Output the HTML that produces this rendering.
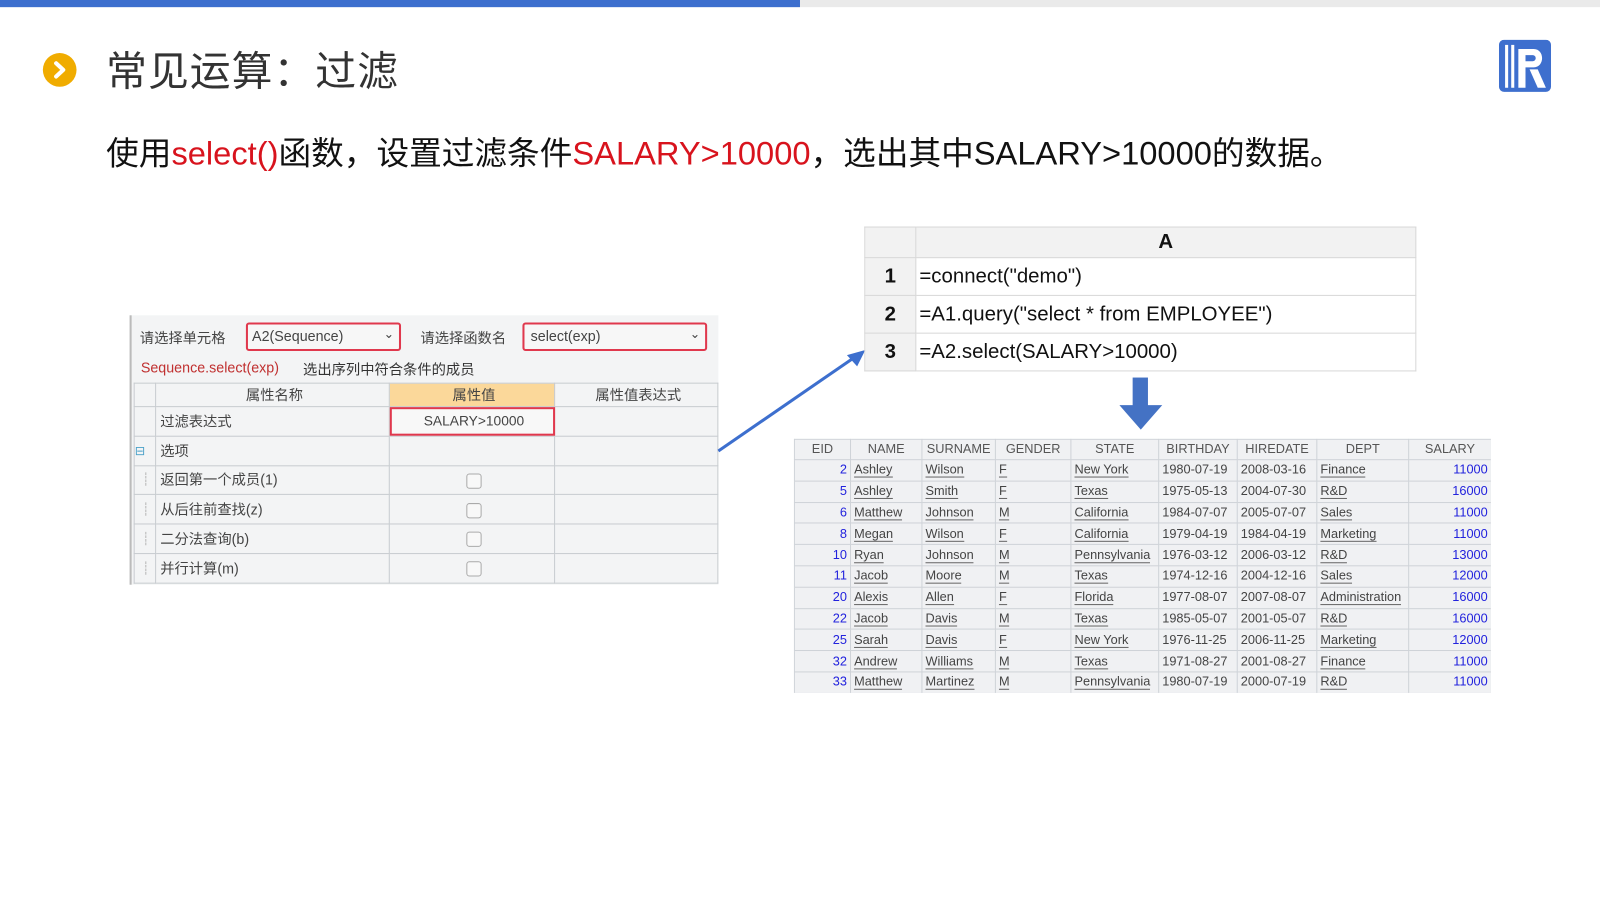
<!DOCTYPE html>
<html><head><meta charset="utf-8">
<style>
*{margin:0;padding:0;box-sizing:border-box}
body{width:1600px;height:900px;background:#fff;position:relative;overflow:hidden;font-family:"Liberation Sans","Noto Sans CJK SC",sans-serif}
#w{position:absolute;left:0;top:0;width:1568px;height:882px;transform:scale(1.0204);transform-origin:0 0}
.a{position:absolute}
table{border-collapse:collapse}
#dt{position:absolute;left:778px;top:430px;width:683px;height:249px;overflow:hidden;background:#f0f1f3}
#dt table{font-size:12.5px;color:#444;table-layout:fixed;width:683px}
#dt td{border:1px solid #cfd3d8;height:20.8px;padding:0 3px;white-space:nowrap;overflow:hidden;line-height:19px}
#dt tr:first-child td{text-align:center;color:#555;height:20px}
#dt td span{border-bottom:1.5px solid #666;}
#dt td.n{text-align:right;color:#2222dd}
#lp{position:absolute;left:127px;top:309px;width:577px;height:264px;background:#f3f4f5;border-left:2px solid #bbb}
#lp .g{position:absolute;left:2px;top:66px}
#lp table{font-size:14px;color:#444;table-layout:fixed}
#lp td{border:1.5px solid #c8ccd0;height:28.8px;padding-left:4px;white-space:nowrap}
.cb{display:inline-block;width:15px;height:15px;border:1.5px solid #aaa;border-radius:3px;background:#f8f8f8;vertical-align:middle}
#cg{position:absolute;left:847px;top:222px}
#cg table{font-family:"Liberation Sans","Noto Sans CJK SC",sans-serif;font-size:20px;color:#111}
#cg td{border:1.5px solid #d8d8d8;padding-left:3px}
#cg td.h{background:#f2f2f2;text-align:center;font-weight:bold;width:50px;padding:0}
</style></head><body>
<div id="w">
<div class="a" style="left:0;top:0;width:1568px;height:7px;background:#eaeaea"></div>
<div class="a" style="left:0;top:0;width:784px;height:7px;background:#3d6fce"></div>
<div class="a" style="left:42px;top:52px;width:33px;height:33px;border-radius:50%;background:#f0ac00"></div>
<svg class="a" style="left:42px;top:52px" width="33" height="33"><path d="M13 10 L20 16.5 L13 23" stroke="#fff" stroke-width="4" fill="none" stroke-linecap="round" stroke-linejoin="round"/></svg>
<div class="a" style="left:104px;top:38px;font-size:40px;color:#333;letter-spacing:1px">常见运算：过滤</div>
<svg class="a" style="left:1469px;top:39px" width="52" height="52" viewBox="0 0 52 52">
<rect x="0" y="0" width="51" height="51" rx="5" fill="#3e6fce"/>
<rect x="6" y="5" width="3" height="42" fill="#fff"/><rect x="12" y="5" width="3" height="42" fill="#fff"/>
<path d="M19 9 H34 C45 9 45 27 34 27 H26 V47 H19 Z M26 15 V21 H33 C37 21 37 15 33 15 Z" fill="#fff" fill-rule="evenodd"/>
<path d="M30 29 L38 47 H46 L38 29 Z" fill="#fff"/>
</svg>
<div class="a" style="left:104px;top:125px;font-size:32px;color:#111;white-space:nowrap">使用<span style="color:#d8131d">select()</span>函数，设置过滤条件<span style="color:#d8131d">SALARY&gt;10000</span>，选出其中SALARY&gt;10000的数据。</div>

<div id="lp">
<div class="a" style="left:8px;top:12px;font-size:14px;color:#444">请选择单元格</div>
<div class="a" style="left:112px;top:7px;width:152px;height:28px;border:2px solid #e0384d;border-radius:3px;background:#f7f7f7;font-size:14px;color:#444;padding:3px 4px">A2(Sequence)<span style="position:absolute;right:5px;top:2px;font-size:12px">&#8964;</span></div>
<div class="a" style="left:283px;top:12px;font-size:14px;color:#444">请选择函数名</div>
<div class="a" style="left:383px;top:7px;width:181px;height:28px;border:2px solid #e0384d;border-radius:3px;background:#f7f7f7;font-size:14px;color:#444;padding:3px 6px">select(exp)<span style="position:absolute;right:5px;top:2px;font-size:12px">&#8964;</span></div>
<div class="a" style="left:9px;top:43px;font-size:14px;color:#c03030">Sequence.select(exp)</div>
<div class="a" style="left:168px;top:43px;font-size:14px;color:#333">选出序列中符合条件的成员</div>
<div class="g"><table>
<colgroup><col style="width:21px"><col style="width:229px"><col style="width:162px"><col style="width:160px"></colgroup>
<tr style="text-align:center"><td style="height:23px"></td><td style="height:23px">属性名称</td><td style="background:#fbd89a;height:23px">属性值</td><td style="height:23px">属性值表达式</td></tr>
<tr><td></td><td>过滤表达式</td><td style="text-align:center;font-size:13.5px;outline:2px solid #e0384d;outline-offset:-2px;background:#f8f8f8">SALARY&gt;10000</td><td></td></tr>
<tr><td style="padding:0;color:#4aa0c8;font-size:12px">⊟</td><td>选项</td><td></td><td></td></tr>
<tr><td style="color:#888">┊</td><td>返回第一个成员(1)</td><td style="text-align:center"><span class="cb"></span></td><td></td></tr>
<tr><td style="color:#888">┊</td><td>从后往前查找(z)</td><td style="text-align:center"><span class="cb"></span></td><td></td></tr>
<tr><td style="color:#888">┊</td><td>二分法查询(b)</td><td style="text-align:center"><span class="cb"></span></td><td></td></tr>
<tr><td style="color:#888">┊</td><td>并行计算(m)</td><td style="text-align:center"><span class="cb"></span></td><td></td></tr>
</table></div>
</div>

<svg class="a" style="left:700px;top:335px" width="160" height="115"><path d="M4 107 L142 12" stroke="#3d6fce" stroke-width="3"/><path d="M148 8 L130 13 L140 24 Z" fill="#3d6fce"/></svg>

<div id="cg"><table>
<tr><td class="h" style="height:30px"></td><td class="h" style="width:490px">A</td></tr>
<tr><td class="h" style="height:37px">1</td><td>=connect("demo")</td></tr>
<tr><td class="h" style="height:37px">2</td><td>=A1.query("select * from EMPLOYEE")</td></tr>
<tr><td class="h" style="height:37px">3</td><td>=A2.select(SALARY&gt;10000)</td></tr>
</table></div>

<svg class="a" style="left:1096px;top:370px" width="44" height="52"><rect x="14" y="0" width="15" height="28" fill="#4472c4"/><path d="M1 27 H43 L22 51 Z" fill="#4472c4"/></svg>

<div id="dt"><table>
<colgroup><col style="width:55px"><col style="width:70px"><col style="width:72px"><col style="width:74px"><col style="width:86px"><col style="width:77px"><col style="width:78px"><col style="width:90px"><col style="width:81px"></colgroup>
<tr><td>EID</td><td>NAME</td><td>SURNAME</td><td>GENDER</td><td>STATE</td><td>BIRTHDAY</td><td>HIREDATE</td><td>DEPT</td><td>SALARY</td></tr>
<tr><td class="n">2</td><td><span>Ashley</span></td><td><span>Wilson</span></td><td><span>F</span></td><td><span>New York</span></td><td>1980-07-19</td><td>2008-03-16</td><td><span>Finance</span></td><td class="n">11000</td></tr>
<tr><td class="n">5</td><td><span>Ashley</span></td><td><span>Smith</span></td><td><span>F</span></td><td><span>Texas</span></td><td>1975-05-13</td><td>2004-07-30</td><td><span>R&amp;D</span></td><td class="n">16000</td></tr>
<tr><td class="n">6</td><td><span>Matthew</span></td><td><span>Johnson</span></td><td><span>M</span></td><td><span>California</span></td><td>1984-07-07</td><td>2005-07-07</td><td><span>Sales</span></td><td class="n">11000</td></tr>
<tr><td class="n">8</td><td><span>Megan</span></td><td><span>Wilson</span></td><td><span>F</span></td><td><span>California</span></td><td>1979-04-19</td><td>1984-04-19</td><td><span>Marketing</span></td><td class="n">11000</td></tr>
<tr><td class="n">10</td><td><span>Ryan</span></td><td><span>Johnson</span></td><td><span>M</span></td><td><span>Pennsylvania</span></td><td>1976-03-12</td><td>2006-03-12</td><td><span>R&amp;D</span></td><td class="n">13000</td></tr>
<tr><td class="n">11</td><td><span>Jacob</span></td><td><span>Moore</span></td><td><span>M</span></td><td><span>Texas</span></td><td>1974-12-16</td><td>2004-12-16</td><td><span>Sales</span></td><td class="n">12000</td></tr>
<tr><td class="n">20</td><td><span>Alexis</span></td><td><span>Allen</span></td><td><span>F</span></td><td><span>Florida</span></td><td>1977-08-07</td><td>2007-08-07</td><td><span>Administration</span></td><td class="n">16000</td></tr>
<tr><td class="n">22</td><td><span>Jacob</span></td><td><span>Davis</span></td><td><span>M</span></td><td><span>Texas</span></td><td>1985-05-07</td><td>2001-05-07</td><td><span>R&amp;D</span></td><td class="n">16000</td></tr>
<tr><td class="n">25</td><td><span>Sarah</span></td><td><span>Davis</span></td><td><span>F</span></td><td><span>New York</span></td><td>1976-11-25</td><td>2006-11-25</td><td><span>Marketing</span></td><td class="n">12000</td></tr>
<tr><td class="n">32</td><td><span>Andrew</span></td><td><span>Williams</span></td><td><span>M</span></td><td><span>Texas</span></td><td>1971-08-27</td><td>2001-08-27</td><td><span>Finance</span></td><td class="n">11000</td></tr>
<tr><td class="n">33</td><td><span>Matthew</span></td><td><span>Martinez</span></td><td><span>M</span></td><td><span>Pennsylvania</span></td><td>1980-07-19</td><td>2000-07-19</td><td><span>R&amp;D</span></td><td class="n">11000</td></tr>
</table></div>
</div>
</body></html>
